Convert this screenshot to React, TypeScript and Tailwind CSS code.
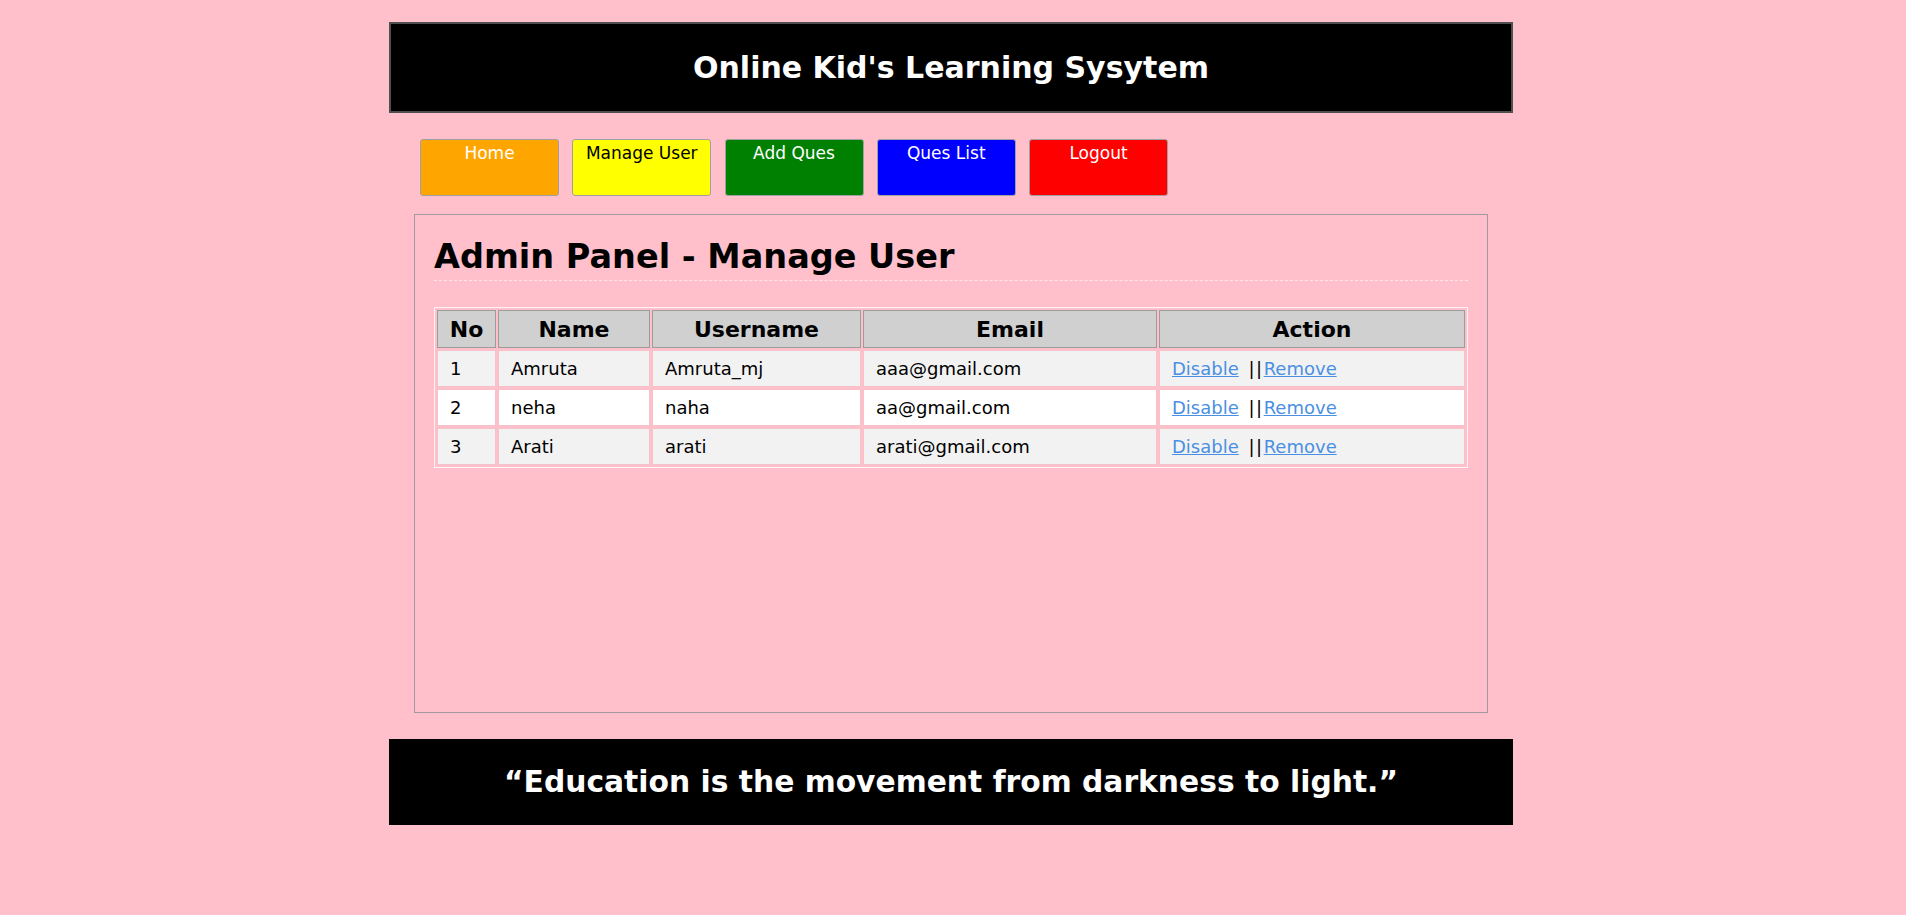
import React from 'react';

const users = [
  { no: 1, name: 'Amruta', username: 'Amruta_mj', email: 'aaa@gmail.com' },
  { no: 2, name: 'neha', username: 'naha', email: 'aa@gmail.com' },
  { no: 3, name: 'Arati', username: 'arati', email: 'arati@gmail.com' },
];

const navItems = [
  { label: 'Home', className: 'bg-[#ffa500] text-white' },
  { label: 'Manage User', className: 'bg-[#ffff00] text-black' },
  { label: 'Add Ques', className: 'bg-[#008000] text-white' },
  { label: 'Ques List', className: 'bg-[#0000ff] text-white' },
  { label: 'Logout', className: 'bg-[#ff0000] text-white' },
];

export default function App() {
  return (
    <div className="min-h-screen bg-[#ffc0cb] pt-[22px] font-['DejaVu_Sans',sans-serif] text-black">
      <div className="ml-[389px] w-[1124px]">
        <header className="flex h-[91px] items-center justify-center border-2 border-[#4f4f4f] bg-black">
          <h1 className="text-[30px] font-bold text-white">Online Kid's Learning Sysytem</h1>
        </header>

        <nav className="mt-[26px] flex gap-[13.25px] pl-[31px]">
          {navItems.map((item) => (
            <button
              key={item.label}
              className={`h-[57px] w-[139px] rounded-[3px] border border-[#a0a0a0] pb-[30px] text-[17px] leading-[20px] ${item.className}`}
            >
              {item.label}
            </button>
          ))}
        </nav>

        <main className="mx-[25px] mt-[18px] h-[499px] border border-[#a3989b] px-[19px]">
          <h2 className="border-b border-dashed border-[#ffe4ea] pb-[3px] pt-[22px] text-[33.5px] font-bold leading-[40px]">
            Admin Panel - Manage User
          </h2>

          <table className="mt-[26px] w-full table-fixed border-separate border-spacing-[2px] border border-[#fff3f5] text-[18px]">
            <colgroup>
              <col className="w-[59px]" />
              <col className="w-[152px]" />
              <col className="w-[209px]" />
              <col className="w-[294px]" />
              <col />
            </colgroup>
            <thead>
              <tr className="h-[38px]">
                {['No', 'Name', 'Username', 'Email', 'Action'].map((h) => (
                  <th key={h} className="border border-[#9c9c9c] bg-[#d0d0d0] p-0 text-center text-[22px] font-bold">
                    {h}
                  </th>
                ))}
              </tr>
            </thead>
            <tbody>
              {users.map((u, i) => (
                <tr key={u.no} className={`h-[37px] ${i % 2 === 0 ? 'bg-[#f2f2f2]' : 'bg-white'}`}>
                  <td className="border border-[#f5c2ca] px-3">{u.no}</td>
                  <td className="border border-[#f5c2ca] px-3">{u.name}</td>
                  <td className="border border-[#f5c2ca] px-3">{u.username}</td>
                  <td className="border border-[#f5c2ca] px-3">{u.email}</td>
                  <td className="border border-[#f5c2ca] px-3">
                    <a href="#" className="text-[#4a90e2] underline">Disable</a>{' '}
                    <span className="ml-[4px] tracking-[1.5px]">||</span>
                    <a href="#" className="text-[#4a90e2] underline">Remove</a>
                  </td>
                </tr>
              ))}
            </tbody>
          </table>
        </main>

        <footer className="mt-[26px] flex h-[86px] items-center justify-center bg-black">
          <p className="text-[29.75px] font-bold text-white">“Education is the movement from darkness to light.”</p>
        </footer>
      </div>
    </div>
  );
}
